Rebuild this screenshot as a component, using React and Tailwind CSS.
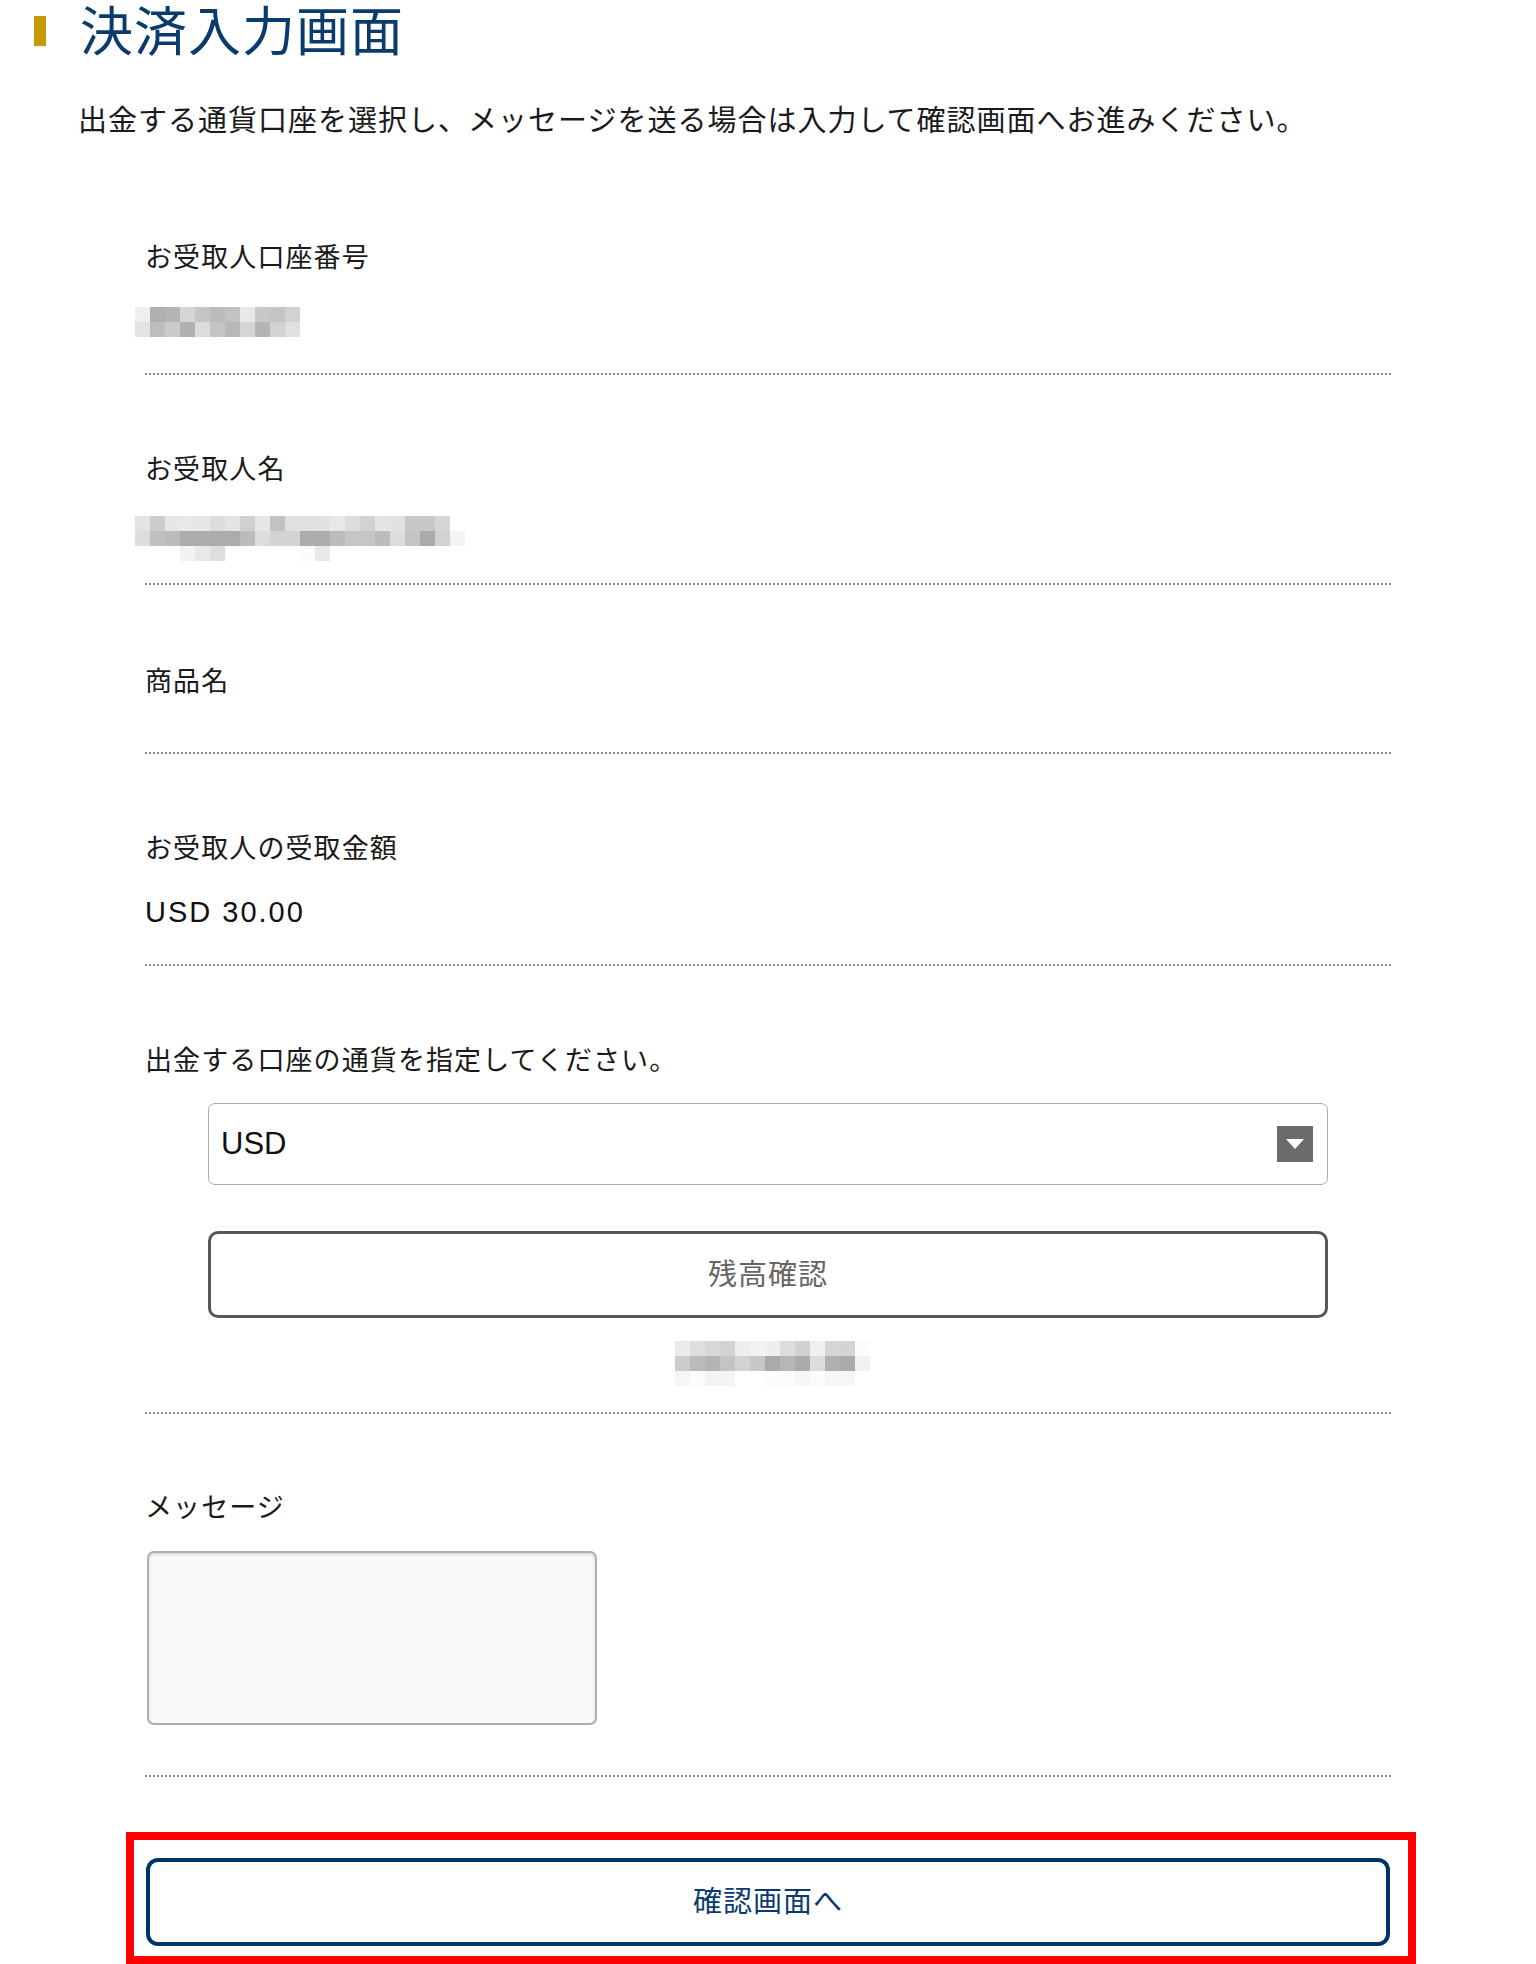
import React from "react";

const FONT = { fontFamily: '"Liberation Sans", "Noto Sans CJK JP", sans-serif' };

const m1 = [
  ["efefef","b0b0b0","b5b5b5","d5d5d5","c5c5c5","bcbcbc","c2c2c2","e8e8e8","c8c8c8","c5c5c5","d2d2d2"],
  ["e3e3e3","bdbdbd","cacaca","b0b0b0","dcdcdc","c5c5c5","b8b8b8","d5d5d5","b5b5b5","d2d2d2","e0e0e0"],
];
const m2 = [
  ["e3e3e3","cccccc","e6e6e6","e8e8e8","e6e6e6","dcdcdc","e4e4e4","d0d0d0","e6e6e6","c2c2c2","e0e0e0","e0e0e0","e2e2e2","e8e8e8","dddddd","d2d2d2","e4e4e4","e2e2e2","c8c8c8","c8c8c8","d6d6d6",null],
  ["dddddd","c0c0c0","bbbbbb","acacac","acacac","acacac","acacac","bcbcbc","dddddd","d4d4d4","d4d4d4","acacac","acacac","bcbcbc","c6c6c6","c6c6c6","bcbcbc","dcdcdc","c4c4c4","aaaaaa","d2d2d2","f4f4f4"],
  [null,null,null,"f2f2f2","e8e8e8","dedede",null,null,null,null,null,"fbfbfb","e8e8e8",null,null,null,null,null,null,null,null,null],
];
const m3 = [
  ["ebebeb","dedede","d8d8d8","d2d2d2","eeeeee","f2f2f2","eeeeee","dddddd","d0d0d0","f0f0f0","d5d5d5","d4d4d4","fcfcfc"],
  ["cccccc","bbbbbb","b4b4b4","c4c4c4","d2d2d2","c8c8c8","aaaaaa","b6b6b6","ababab","dcdcdc","b0b0b0","ababab","f2f2f2"],
  ["f6f6f6","fcfcfc","f4f4f4","f4f4f4",null,null,"fcfcfc","fbfbfb","f6f6f6","fbfbfb","f6f6f6","f6f6f6",null],
];

function Mosaic({ rows, className }) {
  const c = 15;
  const w = rows[0].length * c;
  const h = rows.length * c;
  return (
    <svg width={w} height={h} viewBox={`0 0 ${w} ${h}`} className={className} shapeRendering="crispEdges">
      {rows.map((r, y) =>
        r.map((col, x) =>
          col ? <rect key={`${x}-${y}`} x={x * c} y={y * c} width={c} height={c} fill={`#${col}`} /> : null
        )
      )}
    </svg>
  );
}

function Label({ children }) {
  return (
    <div className="text-[27px] leading-[40px] tracking-[1.1px] text-[#1a1a1a]">{children}</div>
  );
}

export default function App() {
  return (
    <div className="relative w-full min-h-[1964px] overflow-hidden bg-white" style={FONT}>
      {/* Header */}
      <div className="flex h-[66px] items-start">
        <div className="ml-[34px] mt-[16px] h-[30px] w-[12px] bg-[#c79a0a]" />
        <h1 className="ml-[34px] text-[53px] leading-[66px] tracking-[1px] text-[#0b3a6d] font-normal">
          決済入力画面
        </h1>
      </div>

      {/* Intro */}
      <p className="mt-[35px] pl-[78px] text-[29px] leading-[40px] tracking-[1px] text-[#1a1a1a]">
        出金する通貨口座を選択し、メッセージを送る場合は入力して確認画面へお進みください。
      </p>

      {/* Sections */}
      <div className="mt-[22px] px-[145px]">
        <section className="border-b-2 border-dotted border-[#8a8a8a] pt-[75px] pb-[36px]">
          <Label>お受取人口座番号</Label>
          <Mosaic rows={m1} className="block mt-[29px] -ml-[10px]" />
        </section>

        <section className="border-b-2 border-dotted border-[#8a8a8a] pt-[75px] pb-[22px]">
          <Label>お受取人名</Label>
          <Mosaic rows={m2} className="block mt-[26px] -ml-[10px]" />
        </section>

        <section className="border-b-2 border-dotted border-[#8a8a8a] pt-[77px] pb-[50px]">
          <Label>商品名</Label>
        </section>

        <section className="border-b-2 border-dotted border-[#8a8a8a] pt-[75px] pb-[32px]">
          <Label>お受取人の受取金額</Label>
          <div className="mt-[23px] text-[29px] leading-[40px] tracking-[2px] text-[#111]">USD 30.00</div>
        </section>

        <section className="border-b-2 border-dotted border-[#8a8a8a] pt-[75px] pb-[26px]">
          <Label>出金する口座の通貨を指定してください。</Label>
          <div className="mx-[63px] mt-[22px] flex h-[82px] items-center justify-between rounded-[7px] border border-[#ababab] bg-white pl-[12px] pr-[14px]">
            <span className="text-[31px] leading-[40px] text-[#111]">USD</span>
            <div className="flex h-[36px] w-[36px] items-center justify-center bg-[#6b6b6b]">
              <svg width="18" height="10" viewBox="0 0 18 10">
                <polygon points="0,0 18,0 9,10" fill="#ffffff" />
              </svg>
            </div>
          </div>
          <button
            type="button"
            className="mx-[63px] mt-[46px] flex h-[87px] w-[calc(100%-126px)] items-center justify-center rounded-[10px] border-[3px] border-[#575757] bg-white text-[29px] leading-[40px] tracking-[1px] text-[#666666]"
          >
            残高確認
          </button>
          <Mosaic rows={m3} className="block mt-[23px] ml-[530px]" />
        </section>

        <section className="border-b-2 border-dotted border-[#8a8a8a] pt-[74px] pb-[50px]">
          <Label>メッセージ</Label>
          <div className="ml-[2px] mt-[23px] h-[174px] w-[450px] rounded-[7px] border-2 border-[#adadad] bg-[#f9f9f9] shadow-[inset_0_2px_3px_rgba(0,0,0,0.12)]" />
        </section>
      </div>

      {/* Confirm button with red highlight */}
      <div className="ml-[126px] mt-[55px] w-[1290px] border-8 border-[#ff0000] pt-[18px] pl-[12px] pr-[18px] pb-[10px]">
        <button
          type="button"
          className="flex h-[88px] w-full items-center justify-center rounded-[12px] border-4 border-[#003366] bg-white text-[29px] leading-[40px] tracking-[1px] text-[#0b3a6d]"
        >
          確認画面へ
        </button>
      </div>
    </div>
  );
}
